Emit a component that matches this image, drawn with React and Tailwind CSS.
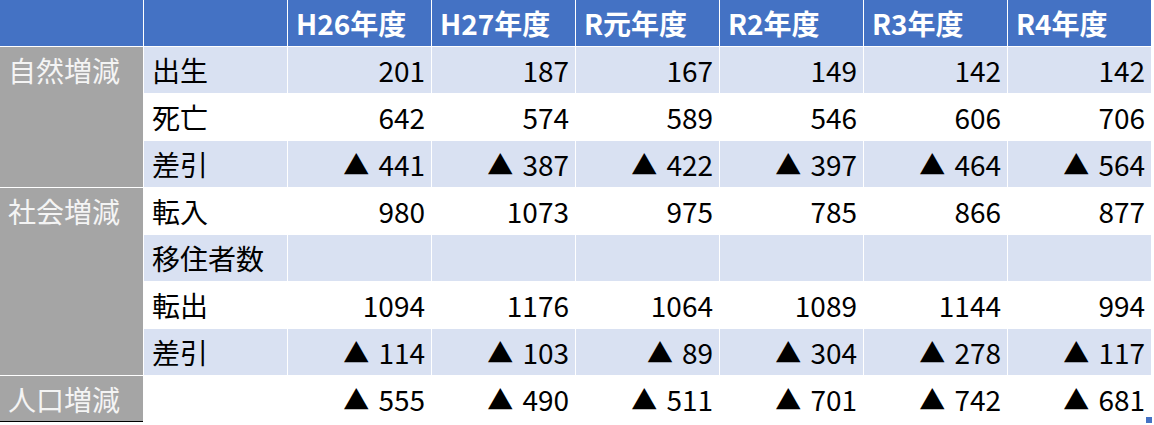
const years = ["H26年度", "H27年度", "R元年度", "R2年度", "R3年度", "R4年度"];

const rows = [
  { label: "出生", values: ["201", "187", "167", "149", "142", "142"], light: true },
  { label: "死亡", values: ["642", "574", "589", "546", "606", "706"] },
  { label: "差引", values: ["▲441", "▲387", "▲422", "▲397", "▲464", "▲564"], light: true },
  { label: "転入", values: ["980", "1073", "975", "785", "866", "877"] },
  { label: "移住者数", values: ["", "", "", "", "", ""], light: true },
  { label: "転出", values: ["1094", "1176", "1064", "1089", "1144", "994"] },
  { label: "差引", values: ["▲114", "▲103", "▲89", "▲304", "▲278", "▲117"], light: true },
  { label: "", values: ["▲555", "▲490", "▲511", "▲701", "▲742", "▲681"] },
];

const groups = [
  { name: "自然増減", start: 2, span: 3 },
  { name: "社会増減", start: 5, span: 4 },
  { name: "人口増減", start: 9, span: 1 },
];

const rowStart = ["row-start-2", "row-start-3", "row-start-4", "row-start-5", "row-start-6", "row-start-7", "row-start-8", "row-start-9"];
const spanClass = { 1: "row-span-1", 3: "row-span-3", 4: "row-span-4" };
const groupStart = { 2: "row-start-2", 5: "row-start-5", 9: "row-start-9" };

function Value({ v }) {
  if (v.startsWith("▲")) {
    return (
      <>
        <span className="text-[26px] mr-[9px]">▲</span>
        <span>{v.slice(1)}</span>
      </>
    );
  }
  return <span>{v}</span>;
}

export default function App() {
  return (
    <div
      className="relative w-[1154px] h-[425px] bg-white text-black text-[28px] leading-none"
      style={{ fontFamily: '"Noto Sans CJK JP", "Noto Sans", sans-serif' }}
    >
      <div className="grid grid-cols-[repeat(8,143px)] grid-rows-[repeat(9,46px)] gap-px bg-white w-[1151px]">
        <div className="col-start-1 row-start-1 bg-[#4472c4]" />
        <div className="col-start-2 row-start-1 bg-[#4472c4]" />
        {years.map((y) => (
          <div
            key={y}
            className="row-start-1 bg-[#4472c4] text-white font-bold flex items-center pl-2 text-[28px]"
          >
            {y}
          </div>
        ))}

        {groups.map((g) => (
          <div
            key={g.name}
            className={`col-start-1 ${groupStart[g.start]} ${spanClass[g.span]} bg-[#a5a5a5] text-[#f4f4f4] pl-2 ${g.span === 1 ? "border-b border-black" : ""}`}
          >
            <div className="h-[46px] flex items-center">{g.name}</div>
          </div>
        ))}

        {rows.map((r, ri) => (
          <div key={ri} className="contents">
            <div
              className={`col-start-2 ${rowStart[ri]} flex items-center pl-2 ${r.light ? "bg-[#d9e1f2]" : "bg-white"}`}
            >
              {r.label}
            </div>
            {r.values.map((v, vi) => (
              <div
                key={vi}
                className={`${rowStart[ri]} flex items-center justify-end pr-[6px] ${r.light ? "bg-[#d9e1f2]" : "bg-white"}`}
              >
                <Value v={v} />
              </div>
            ))}
          </div>
        ))}
      </div>
      <div className="absolute left-[1146px] top-[417px] w-[6px] h-[6px] bg-[#4472c4]" />
    </div>
  );
}
